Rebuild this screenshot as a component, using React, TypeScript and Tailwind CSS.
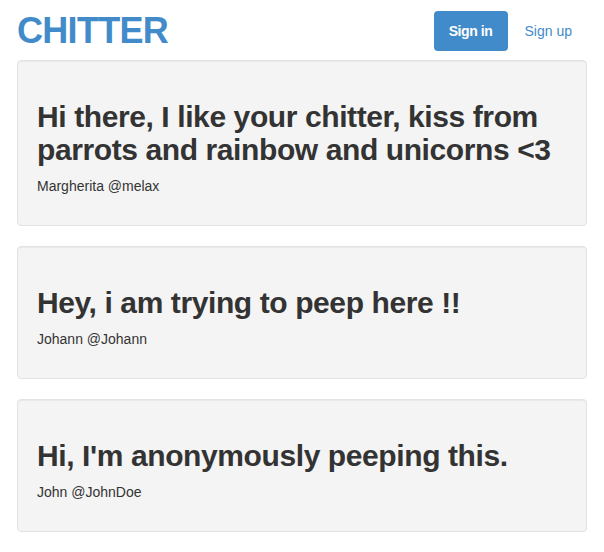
import React from "react";

const posts = [
  {
    text: "Hi there, I like your chitter, kiss from parrots and rainbow and unicorns <3",
    author: "Margherita @melax",
  },
  { text: "Hey, i am trying to peep here !!", author: "Johann @Johann" },
  { text: "Hi, I'm anonymously peeping this.", author: "John @JohnDoe" },
];

export default function App() {
  return (
    <div
      className="min-h-[552px] w-[604px] bg-white text-[#333333]"
      style={{ fontFamily: '"Liberation Sans", Arial, Helvetica, sans-serif' }}
    >
      <div className="flex h-[60px] items-start justify-between px-[17px]">
        <h1 className="pt-[11px] text-[36px] font-bold leading-[40px] tracking-[-0.7px] text-[#428bca]">
          CHITTER
        </h1>
        <div className="flex items-center gap-[2px] pt-[11px]">
          <button className="h-[40px] rounded-[4px] bg-[#428bca] px-[15px] text-[14px] font-bold leading-[20px] tracking-[-0.4px] text-white">
            Sign in
          </button>
          <a className="px-[15px] text-[14px] leading-[20px] text-[#428bca]">Sign up</a>
        </div>
      </div>
      <div className="flex flex-col gap-[20px] px-[17px] pb-[20px]">
        {posts.map((p, i) => (
          <div
            key={i}
            className="rounded-[4px] border border-[#e3e3e3] bg-[#f4f4f4] p-[19px] shadow-[inset_0_1px_1px_rgba(0,0,0,0.05)]"
          >
            <h2 className="mt-[20px] mb-[10px] text-[30px] font-bold leading-[33px] tracking-[-0.4px] text-[#333333]">
              {p.text}
            </h2>
            <p className="mb-[10px] text-[14px] leading-[20px] text-[#333333]">{p.author}</p>
          </div>
        ))}
      </div>
    </div>
  );
}
